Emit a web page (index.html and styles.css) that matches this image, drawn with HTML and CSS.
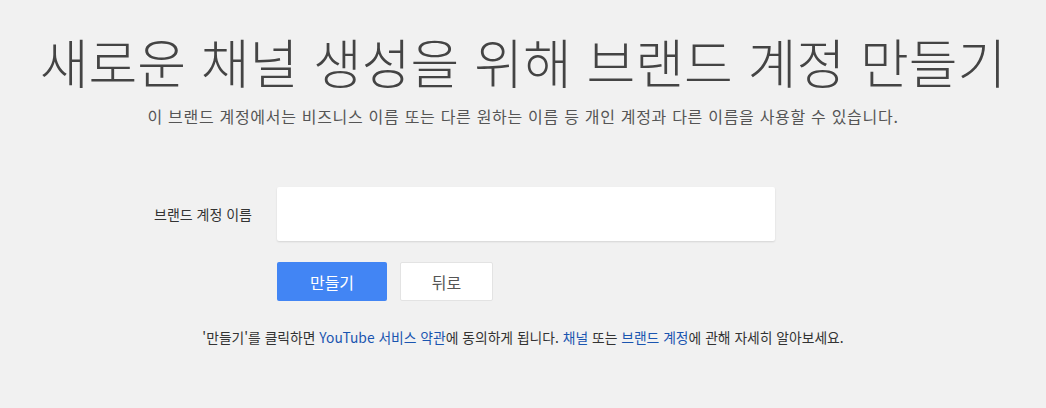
FILE: index.html
```html
<!DOCTYPE html>
<html lang="ko">

<head>
    <meta charset="UTF-8">
    <meta name="viewport" content="width=device-width, initial-scale=1.0">
    <title>브랜드 계정 만들기</title>
    <link rel="stylesheet" href="styles.css">
</head>

<body>
    <div class="page">
        <h1 class="title">새로운 채널 생성을 위해 브랜드 계정 만들기</h1>
        <p class="subtitle">이 브랜드 계정에서는 비즈니스 이름 또는 다른 원하는 이름 등 개인 계정과 다른 이름을 사용할 수 있습니다.</p>

        <div class="form">
            <div class="form-row">
                <label class="field-label" for="brand-name">브랜드 계정 이름</label>
                <input class="field-input" id="brand-name" type="text">
            </div>
            <div class="form-row">
                <span class="field-label"></span>
                <div class="actions">
                    <button class="btn btn-primary">만들기</button>
                    <button class="btn btn-secondary">뒤로</button>
                </div>
            </div>
        </div>

        <p class="terms">'만들기'를 클릭하면 <a href="#">YouTube 서비스 약관</a>에 동의하게 됩니다. <a href="#">채널</a> 또는 <a href="#">브랜드 계정</a>에 관해 자세히 알아보세요.</p>
    </div>
</body>

</html>
```

FILE: styles.css
```css
body {
    margin: 0;
    background-color: #f1f1f1;
    color: #333;
    font-family: "Noto Sans CJK KR", "Noto Sans", sans-serif;
}

.page {
    display: flex;
    flex-direction: column;
    align-items: center;
    padding-top: 28px;
}

.title {
    margin: 0;
    font-size: 53px;
    font-weight: 300;
    line-height: 66px;
    color: #444;
}

.subtitle {
    margin: 11px 0 0;
    font-size: 16px;
    letter-spacing: 0.7px;
    line-height: 22px;
    color: #555;
}

.form {
    margin-top: 60px;
    display: flex;
    flex-direction: column;
    gap: 21px;
    margin-right: 141px;
}

.form-row {
    display: flex;
    align-items: center;
    gap: 25px;
}

.field-label {
    width: 122px;
    text-align: right;
    font-size: 14px;
    color: #333;
}

.field-input {
    box-sizing: border-box;
    width: 498px;
    height: 54px;
    border: none;
    border-radius: 2px;
    background-color: #fff;
    box-shadow: 0 1px 2px rgba(0, 0, 0, 0.12);
    outline: none;
    padding: 0 14px;
    font-size: 15px;
}

.actions {
    display: flex;
    gap: 13px;
}

.btn {
    height: 39px;
    border-radius: 2px;
    font-family: inherit;
    font-size: 16px;
    cursor: pointer;
}

.btn-primary {
    width: 110px;
    border: none;
    background-color: #4285f4;
    color: #fff;
}

.btn-secondary {
    width: 93px;
    border: 1px solid #e3e3e3;
    background-color: #fff;
    color: #555;
}

.terms {
    margin: 26px 0 0;
    font-size: 13.8px;
    color: #333;
}

.terms a {
    color: #1a55b0;
    text-decoration: none;
}
```
